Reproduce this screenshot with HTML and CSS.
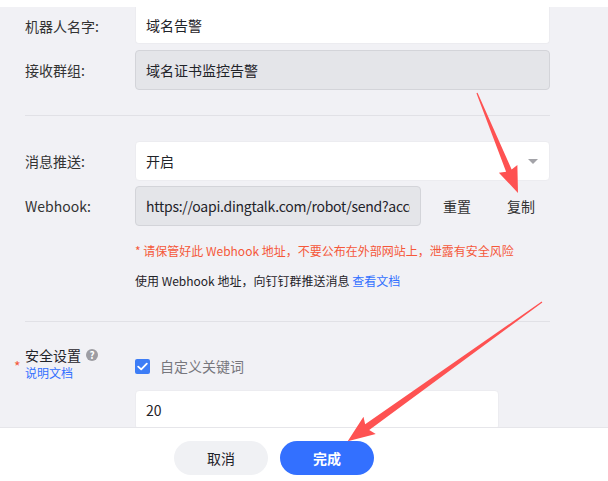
FILE: index.html
```html
<!DOCTYPE html>
<html lang="zh-CN">
<head>
    <meta charset="UTF-8">
    <meta name="viewport" content="width=device-width, initial-scale=1.0">
    <title>机器人设置</title>
    <link rel="stylesheet" href="styles.css">
</head>
<body>
<div class="page">
    <div class="topbar"></div>

    <!-- 表单内容 -->
    <div class="content">
        <div class="row first">
            <div class="label">机器人名字:</div>
            <input class="input wide" value="域名告警">
        </div>
        <div class="row">
            <div class="label">接收群组:</div>
            <input class="input wide disabled" value="域名证书监控告警" readonly>
        </div>

        <div class="divider first-divider"></div>

        <div class="row">
            <div class="label">消息推送:</div>
            <div class="input wide select">
                <span>开启</span>
                <span class="caret"></span>
            </div>
        </div>
        <div class="row">
            <div class="label">Webhook:</div>
            <input class="input hook disabled" value="https://oapi.dingtalk.com/robot/send?access_token=" readonly>
            <div class="actions">
                <span class="text-btn">重置</span>
                <span class="text-btn">复制</span>
            </div>
        </div>
        <div class="note warn">* 请保管好此 Webhook 地址，不要公布在外部网站上，泄露有安全风险</div>
        <div class="note info">使用 Webhook 地址，向钉钉群推送消息 <span class="link">查看文档</span></div>

        <div class="divider second-divider"></div>

        <div class="security">
            <div class="sec-label">
                <span class="star">*</span>
                <div class="sec-text">
                    <div class="sec-title">安全设置 <span class="help">?</span></div>
                    <div class="link small">说明文档</div>
                </div>
            </div>
            <div class="sec-body">
                <div class="check-row">
                    <span class="checkbox">
                        <svg width="11" height="9" viewBox="0 0 11 9"><path d="M1.2 4.6 L4.2 7.4 L9.8 1.6" fill="none" stroke="#fff" stroke-width="1.8" stroke-linecap="round" stroke-linejoin="round"/></svg>
                    </span>
                    <span class="check-text">自定义关键词</span>
                </div>
                <input class="input keyword" value="20">
            </div>
        </div>
    </div>

    <!-- 底部按钮 -->
    <div class="footer">
        <button class="btn cancel">取消</button>
        <button class="btn ok">完成</button>
    </div>
</div>

<!-- 标注箭头 -->
<svg class="arrows" width="608" height="481" viewBox="0 0 608 481">
    <g transform="translate(477 93) rotate(67.7)" fill="#fe5252">
        <polygon points="0,-0.6 84,-3 82,-10 108,0 82,10 84,3 0,0.6"/>
    </g>
    <g transform="translate(542 302) rotate(144.4)" fill="#fe5252">
        <polygon points="0,-0.6 215,-3.5 212,-10.5 239,0 212,10.5 215,3.5 0,0.6"/>
    </g>
</svg>
</body>
</html>
```

FILE: styles.css
```css
* {
    box-sizing: border-box;
}
body {
    margin: 0;
    width: 608px;
    height: 481px;
    overflow: hidden;
    position: relative;
    background-color: #f1f1f5;
    font-family: "Noto Sans CJK SC", "Noto Sans", sans-serif;
    font-size: 14px;
    color: #1f2329;
}
.page {
    display: flex;
    flex-direction: column;
    height: 481px;
}
.topbar {
    height: 7px;
    background-color: #fff;
    flex: none;
}
.content {
    flex: 1;
    overflow: hidden;
    padding: 0 58px 0 25px;
}
.row {
    display: flex;
    align-items: center;
    height: 40px;
    margin-bottom: 5px;
}
.row.first {
    height: 37px;
    margin-bottom: 6px;
}
.label {
    width: 110px;
    flex: none;
    color: #333;
}
.input {
    height: 100%;
    padding: 0 10px;
    border: 1px solid #ececf0;
    border-radius: 4px;
    background-color: #fff;
    font-family: inherit;
    font-size: 14px;
    color: #1f2329;
    outline: none;
}
.row.first .input {
    border-top: none;
    border-radius: 0 0 4px 4px;
}
.input.wide {
    width: 415px;
}
.input.disabled {
    background-color: #e4e5e9;
    border-color: #d3d4d9;
}
.select {
    display: flex;
    align-items: center;
    justify-content: space-between;
    padding-right: 11px;
}
.caret {
    width: 0;
    height: 0;
    border-left: 5px solid transparent;
    border-right: 5px solid transparent;
    border-top: 5px solid #a3a3a8;
}
.input.hook {
    width: 286px;
    letter-spacing: -0.25px;
}
.actions {
    display: flex;
    gap: 36px;
    margin-left: 22px;
    color: #333;
}
.divider {
    height: 1px;
    background-color: #e1e1e6;
}
.first-divider {
    margin: 25px 0 25px;
}
.note {
    font-size: 12px;
    line-height: 18px;
    padding-left: 110px;
}
.warn {
    margin-top: 16px;
    color: #f5583a;
}
.info {
    margin-top: 12px;
    color: #1f2329;
}
.link {
    color: #3370ff;
}
.second-divider {
    margin: 31px 0 24px;
}
.security {
    display: flex;
}
.sec-label {
    width: 110px;
    flex: none;
    display: flex;
    align-items: center;
    align-self: flex-start;
}
.star {
    width: 11px;
    margin-left: -11px;
    color: #f5583a;
    font-size: 14px;
    padding-top: 4px;
}
.sec-title {
    line-height: 18px;
    color: #1f2329;
    display: flex;
    align-items: center;
}
.help {
    display: inline-flex;
    align-items: center;
    justify-content: center;
    width: 12px;
    height: 12px;
    margin-left: 5px;
    border-radius: 50%;
    background-color: #9d9da3;
    color: #fff;
    font-size: 10px;
    font-weight: bold;
    line-height: 1;
}
.small {
    font-size: 12px;
    line-height: 18px;
}
.sec-body {
    padding-top: 10px;
}
.check-row {
    display: flex;
    align-items: center;
    height: 20px;
}
.checkbox {
    width: 15px;
    height: 15px;
    border-radius: 2px;
    background-color: #3d7df6;
    display: flex;
    align-items: center;
    justify-content: center;
}
.check-text {
    margin-left: 10px;
    color: #77777d;
}
.input.keyword {
    display: block;
    margin-top: 14px;
    width: 364px;
    height: 40px;
}
.footer {
    flex: none;
    height: 54px;
    background-color: #fff;
    border-top: 1px solid #e6e6ea;
    display: flex;
    align-items: flex-start;
    gap: 12px;
    padding: 13px 0 0 174px;
}
.btn {
    width: 94px;
    height: 34px;
    border: none;
    border-radius: 17px;
    font-family: inherit;
    font-size: 14px;
    cursor: pointer;
}
.cancel {
    background-color: #f0f1f4;
    color: #1f2329;
}
.ok {
    background-color: #3370ff;
    color: #fff;
    font-weight: bold;
}
.arrows {
    position: absolute;
    left: 0;
    top: 0;
    pointer-events: none;
}
```
